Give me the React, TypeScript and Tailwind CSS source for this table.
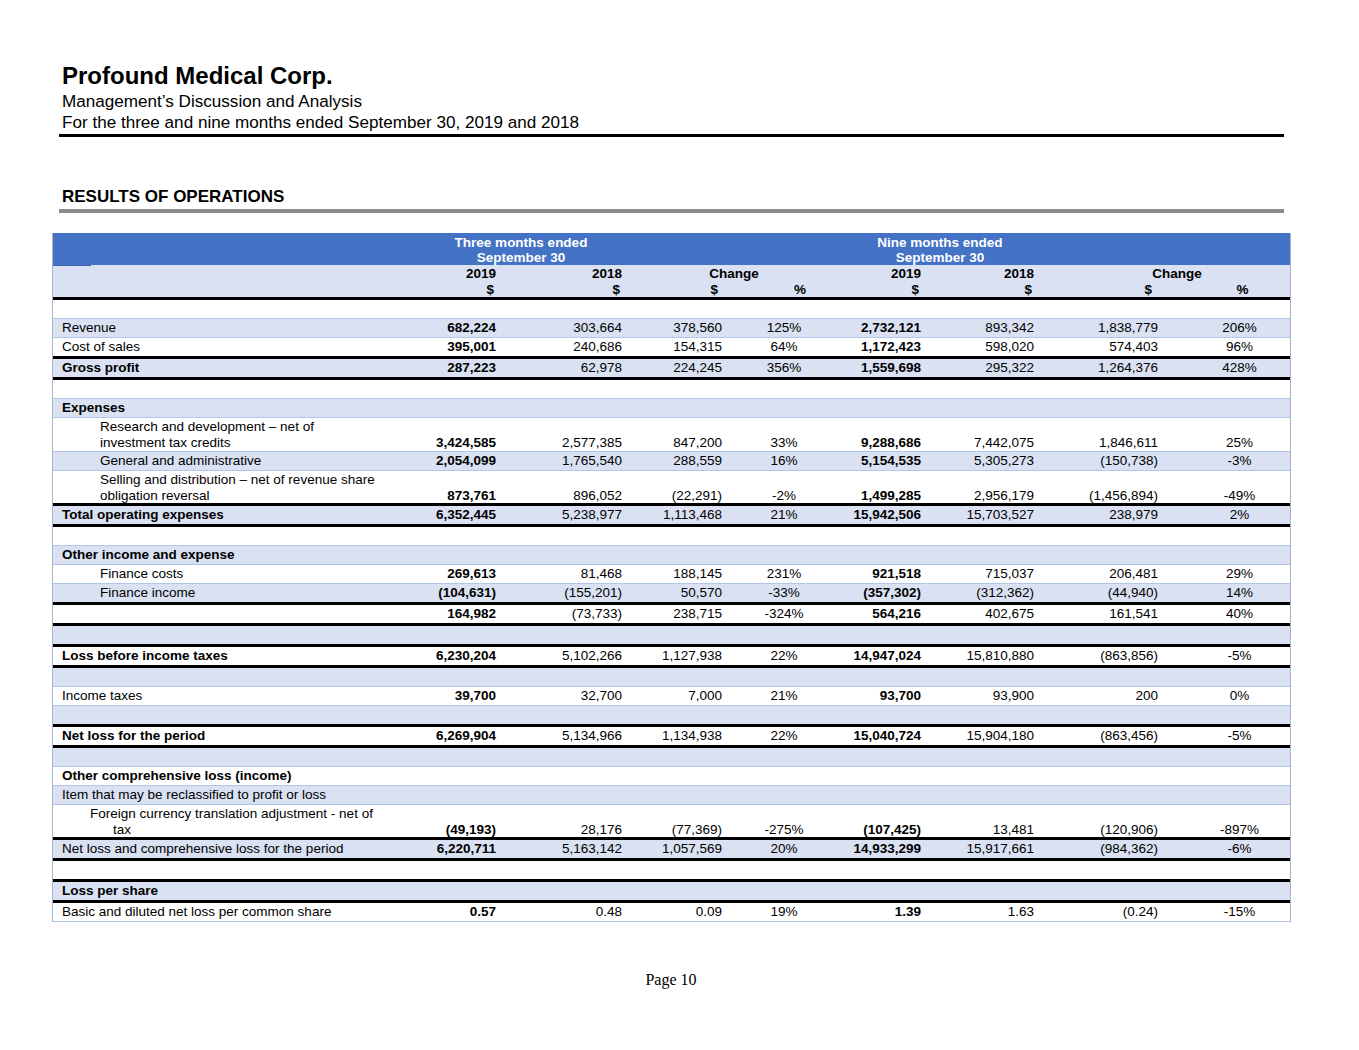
import React from "react";

type Row = {
  label?: string[];
  indent?: number;
  indent2?: number;
  bold?: boolean;
  vals?: string[];
  bg: "l" | "w";
  h: number;
  thick?: boolean;
};

const rows: Row[] = [
  { bg: "w", h: 19 },
  { label: ["Revenue"], bg: "l", h: 19, vals: ["682,224", "303,664", "378,560", "125%", "2,732,121", "893,342", "1,838,779", "206%"] },
  { label: ["Cost of sales"], bg: "w", h: 18, thick: true, vals: ["395,001", "240,686", "154,315", "64%", "1,172,423", "598,020", "574,403", "96%"] },
  { label: ["Gross profit"], bold: true, bg: "l", h: 18, thick: true, vals: ["287,223", "62,978", "224,245", "356%", "1,559,698", "295,322", "1,264,376", "428%"] },
  { bg: "w", h: 19 },
  { label: ["Expenses"], bold: true, bg: "l", h: 19 },
  { label: ["Research and development \u2013 net of", "investment tax credits"], indent: 38, bg: "w", h: 34, vals: ["3,424,585", "2,577,385", "847,200", "33%", "9,288,686", "7,442,075", "1,846,611", "25%"] },
  { label: ["General and administrative"], indent: 38, bg: "l", h: 19, vals: ["2,054,099", "1,765,540", "288,559", "16%", "5,154,535", "5,305,273", "(150,738)", "-3%"] },
  { label: ["Selling and distribution \u2013 net of revenue share", "obligation reversal"], indent: 38, bg: "w", h: 32, thick: true, vals: ["873,761", "896,052", "(22,291)", "-2%", "1,499,285", "2,956,179", "(1,456,894)", "-49%"] },
  { label: ["Total operating expenses"], bold: true, bg: "l", h: 18, thick: true, vals: ["6,352,445", "5,238,977", "1,113,468", "21%", "15,942,506", "15,703,527", "238,979", "2%"] },
  { bg: "w", h: 19 },
  { label: ["Other income and expense"], bold: true, bg: "l", h: 19 },
  { label: ["Finance costs"], indent: 38, bg: "w", h: 19, vals: ["269,613", "81,468", "188,145", "231%", "921,518", "715,037", "206,481", "29%"] },
  { label: ["Finance income"], indent: 38, bg: "l", h: 18, thick: true, vals: ["(104,631)", "(155,201)", "50,570", "-33%", "(357,302)", "(312,362)", "(44,940)", "14%"] },
  { label: [""], bg: "w", h: 18, thick: true, vals: ["164,982", "(73,733)", "238,715", "-324%", "564,216", "402,675", "161,541", "40%"] },
  { bg: "l", h: 18, thick: true },
  { label: ["Loss before income taxes"], bold: true, bg: "w", h: 18, thick: true, vals: ["6,230,204", "5,102,266", "1,127,938", "22%", "14,947,024", "15,810,880", "(863,856)", "-5%"] },
  { bg: "l", h: 19 },
  { label: ["Income taxes"], bg: "w", h: 19, vals: ["39,700", "32,700", "7,000", "21%", "93,700", "93,900", "200", "0%"] },
  { bg: "l", h: 18, thick: true },
  { label: ["Net loss for the period"], bold: true, bg: "w", h: 18, thick: true, vals: ["6,269,904", "5,134,966", "1,134,938", "22%", "15,040,724", "15,904,180", "(863,456)", "-5%"] },
  { bg: "l", h: 19 },
  { label: ["Other comprehensive loss (income)"], bold: true, bg: "w", h: 19 },
  { label: ["Item that may be reclassified to profit or loss"], bg: "l", h: 19 },
  { label: ["Foreign currency translation adjustment - net of", "tax"], indent: 28, indent2: 23, bg: "w", h: 32, thick: true, vals: ["(49,193)", "28,176", "(77,369)", "-275%", "(107,425)", "13,481", "(120,906)", "-897%"] },
  { label: ["Net loss and comprehensive loss for the period"], bg: "l", h: 18, thick: true, vals: ["6,220,711", "5,163,142", "1,057,569", "20%", "14,933,299", "15,917,661", "(984,362)", "-6%"] },
  { bg: "w", h: 18, thick: true },
  { label: ["Loss per share"], bold: true, bg: "l", h: 18, thick: true },
  { label: ["Basic and diluted net loss per common share"], bg: "w", h: 19, vals: ["0.57", "0.48", "0.09", "19%", "1.39", "1.63", "(0.24)", "-15%"] },
];

const grid = "grid grid-cols-[379px_64px_126px_100px_124px_75px_113px_124px_132px]";

function DataRow({ r }: { r: Row }) {
  const bg = r.bg === "l" ? "bg-[#D9E1F2]" : "bg-white";
  const border = r.thick ? "" : "border-b border-[#B4C6E7]";
  const style = { height: r.h };
  const v = r.vals;
  return (
    <>
      <div className={`${grid} ${bg} ${border} box-border items-end pb-[1px]`} style={style}>
        <div
          className={`${r.bold ? "font-bold" : ""} self-start pt-[1px] whitespace-nowrap`}
          style={{ paddingLeft: 9 + (r.indent ?? 0) }}
        >
          {r.label?.map((l, i) => (
            <div key={i} style={{ paddingLeft: i > 0 ? r.indent2 ?? 0 : 0 }}>
              {l}
            </div>
          ))}
        </div>
        {v ? (
          <>
            <div className="text-right font-bold">{v[0]}</div>
            <div className="text-right">{v[1]}</div>
            <div className="text-right">{v[2]}</div>
            <div className="text-center">{v[3]}</div>
            <div className="text-right font-bold">{v[4]}</div>
            <div className="text-right">{v[5]}</div>
            <div className="text-right">{v[6]}</div>
            <div className="text-center pl-[31px]">{v[7]}</div>
          </>
        ) : null}
      </div>
      {r.thick ? <div className="h-[3px] bg-black" /> : null}
    </>
  );
}

export default function App() {
  return (
    <div className="min-h-[1050px] w-[1359px] bg-white text-black font-['Liberation_Sans',Arial,sans-serif]">
      <div className="pt-[62px] pl-[59px] w-[1284px]">
        <div className="pl-[3px]">
          <div className="text-[24px] font-bold leading-[28px]">Profound Medical Corp.</div>
          <div className="text-[17.1px] leading-[21px] mt-[1px]">Management’s Discussion and Analysis</div>
          <div className="text-[17.1px] leading-[21px]">For the three and nine months ended September 30, 2019 and 2018</div>
        </div>
        <div className="h-[3px] bg-black mt-[1px] w-[1225px]" />
        <div className="pl-[3px] mt-[50px] text-[17px] font-bold leading-[20px]">RESULTS OF OPERATIONS</div>
        <div className="h-[4px] bg-[#8C8C8C] mt-[2px] w-[1225px]" />
      </div>

      <div className="ml-[52px] mt-[20px] w-[1239px] border-x border-[#A8B4CC] text-[13.5px] leading-[16px]">
        <div className="h-[32px] bg-[#4472C4] text-white font-bold leading-[15px] pt-[2px] flex">
          <div className="ml-[318px] w-[300px] text-center">
            <div>Three months ended</div>
            <div>September 30</div>
          </div>
          <div className="ml-[119px] w-[300px] text-center">
            <div>Nine months ended</div>
            <div>September 30</div>
          </div>
        </div>
        <div className="relative h-[32px] bg-[#D9E1F2] font-bold pt-[1px]">
          <div className="absolute left-0 top-0 h-[1px] w-[38px] bg-[#3A62AA]" />
          <div className={grid}>
            <div />
            <div className="text-right">2019</div>
            <div className="text-right">2018</div>
            <div className="col-span-2 text-center">Change</div>
            <div className="text-right">2019</div>
            <div className="text-right">2018</div>
            <div className="col-span-2 text-center pl-[30px]">Change</div>
          </div>
          <div className={grid}>
            <div />
            <div className="text-right pr-[2px]">$</div>
            <div className="text-right pr-[2px]">$</div>
            <div className="text-right pr-[4px]">$</div>
            <div className="text-center pl-[32px]">%</div>
            <div className="text-right pr-[2px]">$</div>
            <div className="text-right pr-[2px]">$</div>
            <div className="text-right pr-[6px]">$</div>
            <div className="text-center pl-[37px]">%</div>
          </div>
        </div>
        <div className="h-[3px] bg-black" />
        {rows.map((r, i) => (
          <DataRow key={i} r={r} />
        ))}
      </div>

      <div className="mt-[48px] text-center text-[16px] leading-[20px] font-['Liberation_Serif',serif] w-[1342px]">
        Page 10
      </div>
    </div>
  );
}
